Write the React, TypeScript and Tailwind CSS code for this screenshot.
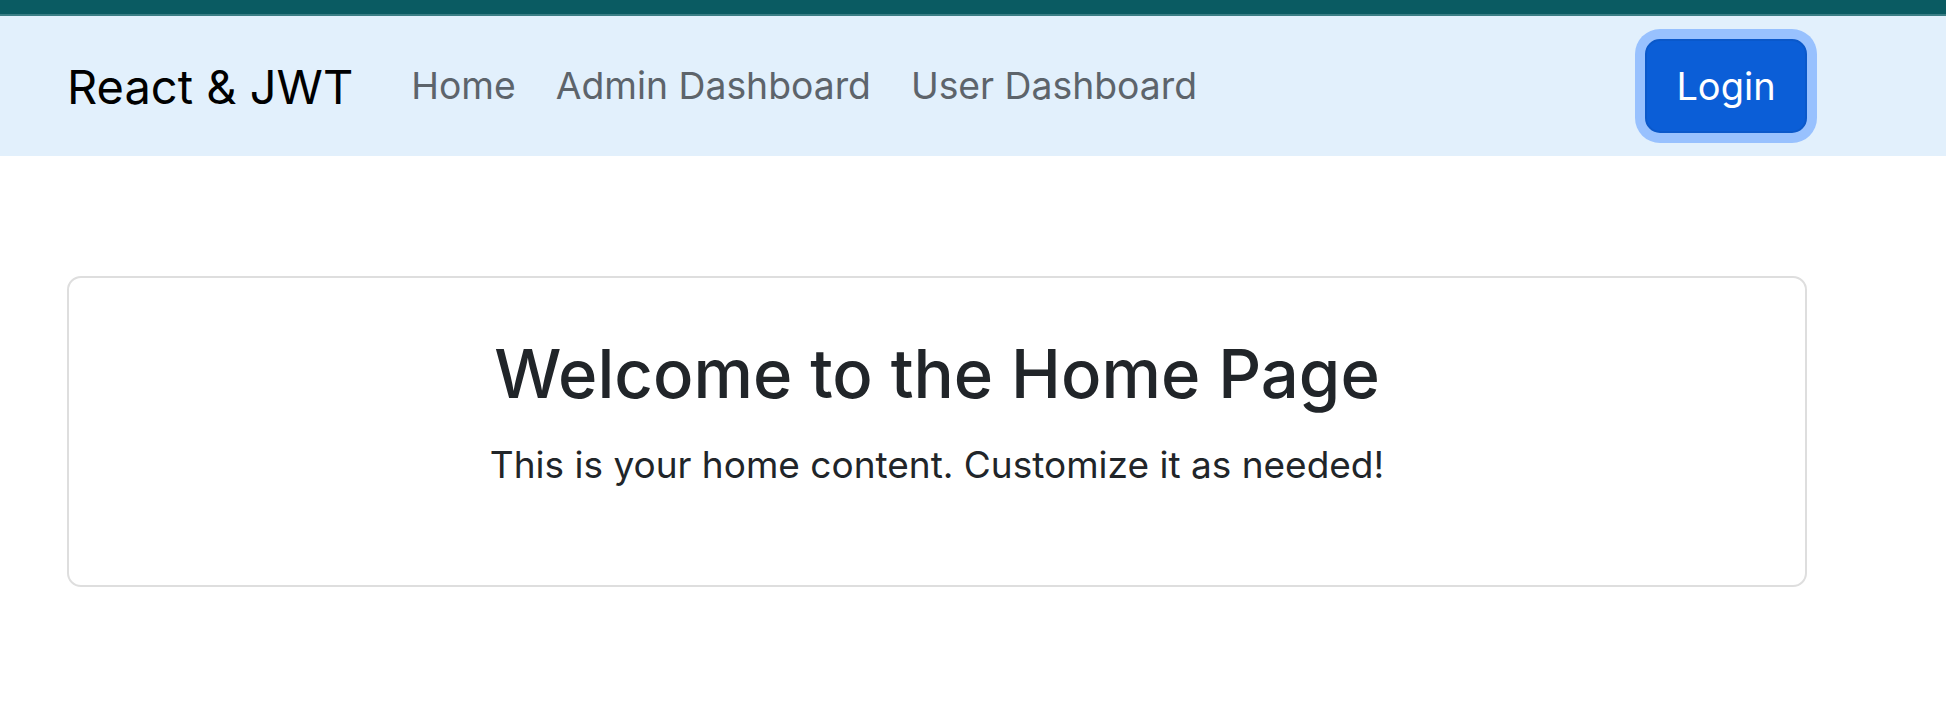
import React from "react";

export default function App() {
  const font = { fontFamily: '"Inter", "Noto Sans", "Liberation Sans", sans-serif' };
  return (
    <div className="w-[1946px] min-h-[726px] bg-white" style={font}>
      <div className="h-[16px] bg-[#0a5b62] border-b-[2px] border-[#3b7e85]" />
      <nav className="h-[140px] bg-[#e2f0fc] flex items-center pl-[67px] pr-[139px]">
        <a className="text-[47px] leading-none text-black">React &amp; JWT</a>
        <div className="flex items-center gap-[40px] ml-[58px]">
          <a className="text-[37.3px] leading-none text-[#5d646b]">Home</a>
          <a className="text-[37.3px] leading-none text-[#5d646b]">Admin Dashboard</a>
          <a className="text-[37.3px] leading-none text-[#5d646b]">User Dashboard</a>
        </div>
        <div className="flex-1" />
        <button className="w-[162px] h-[94px] rounded-[15px] bg-[#0b5ed7] border-2 border-[#0a58ca] text-white text-[38px] leading-none shadow-[0_0_0_10px_#98c1fe] flex items-center justify-center">
          Login
        </button>
      </nav>
      <main className="pl-[67px] pr-[139px] pt-[120px]">
        <div className="h-[311px] border-2 border-[#dedede] rounded-[14px] pt-[54px] flex flex-col items-center text-[#212529]">
          <h2 className="text-[67px] leading-[84px] font-medium">Welcome to the Home Page</h2>
          <p className="mt-[21px] text-[37px] leading-[56px]">This is your home content. Customize it as needed!</p>
        </div>
      </main>
    </div>
  );
}
